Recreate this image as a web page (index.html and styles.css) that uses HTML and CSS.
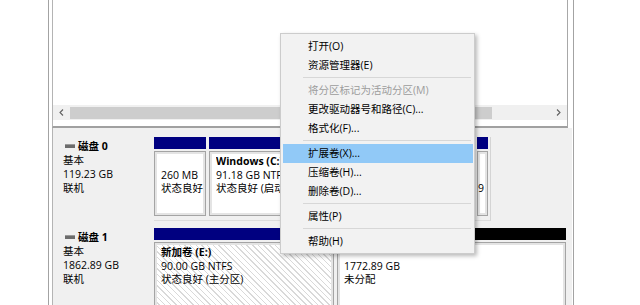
FILE: index.html
```html
<!DOCTYPE html>
<html lang="zh-CN">
<head>
<meta charset="utf-8">
<title>磁盘管理</title>
<link rel="stylesheet" href="styles.css">
</head>
<body>
<div class="shell">
  <div class="pane-top">
    <div class="volume-list"></div>
    <div class="hscroll">
      <span class="sb-arrow"><svg width="5" height="7" viewBox="0 0 5 7"><path d="M4 0.5 L1 3.5 L4 6.5" fill="none" stroke="#606060" stroke-width="1.1"/></svg></span>
      <div class="sb-track"><div class="sb-thumb"></div></div>
      <span class="sb-arrow"><svg width="5" height="7" viewBox="0 0 5 7"><path d="M1 0.5 L4 3.5 L1 6.5" fill="none" stroke="#606060" stroke-width="1.1"/></svg></span>
    </div>
    <div class="pane-gap"></div>
  </div>
  <div class="pane-bottom">
    <div class="disk">
      <div class="disk-label">
        <div class="disk-name"><span class="disk-icon"></span>磁盘 0</div>
        <div>基本</div>
        <div>119.23 GB</div>
        <div>联机</div>
      </div>
      <div class="disk-parts d0">
        <div class="part p-esp">
          <div class="bar"></div>
          <div class="box"><div>&nbsp;</div><div>260 MB</div><div>状态良好</div></div>
        </div>
        <div class="part p-win">
          <div class="bar"></div>
          <div class="box"><div class="b clip">Windows (C:)</div><div class="clip">91.18 GB NTFS</div><div class="clip">状态良好 (启动, 页面文件, 故障转储, 主分区)</div></div>
        </div>
        <div class="part p-rec">
          <div class="bar"></div>
          <div class="box"><div>&nbsp;</div><div>&nbsp;</div><div>9</div></div>
        </div>
      </div>
    </div>
    <div class="disk">
      <div class="disk-label">
        <div class="disk-name"><span class="disk-icon"></span>磁盘 1</div>
        <div>基本</div>
        <div>1862.89 GB</div>
        <div>联机</div>
      </div>
      <div class="disk-parts d1">
        <div class="part p-new">
          <div class="bar"></div>
          <div class="box hatched"><div class="b">新加卷 (E:)</div><div>90.00 GB NTFS</div><div>状态良好 (主分区)</div></div>
        </div>
        <div class="part p-free">
          <div class="bar black"></div>
          <div class="box"><div>&nbsp;</div><div>1772.89 GB</div><div>未分配</div></div>
        </div>
      </div>
    </div>
  </div>
</div>

<div class="menu">
  <div class="mi">打开(O)</div>
  <div class="mi">资源管理器(E)</div>
  <div class="sep"></div>
  <div class="mi dis">将分区标记为活动分区(M)</div>
  <div class="mi">更改驱动器号和路径(C)...</div>
  <div class="mi">格式化(F)...</div>
  <div class="sep"></div>
  <div class="mi hl">扩展卷(X)...</div>
  <div class="mi">压缩卷(H)...</div>
  <div class="mi">删除卷(D)...</div>
  <div class="sep"></div>
  <div class="mi">属性(P)</div>
  <div class="sep"></div>
  <div class="mi">帮助(H)</div>
</div>
</body>
</html>
```

FILE: styles.css
```css
* { box-sizing: border-box; }
html, body { margin: 0; padding: 0; }
body {
  width: 640px;
  height: 305px;
  overflow: hidden;
  background: #fff;
  position: relative;
  font-family: "Open Sans", "Noto Sans CJK SC", sans-serif;
  font-size: 10.5px;
  color: #000;
}

.shell {
  margin-left: 48px;
  width: 526px;
  height: 305px;
  border-left: 1px solid #a3a3a3;
  border-right: 1px solid #a3a3a3;
  padding-left: 3px;
  padding-right: 1px;
  display: flex;
  flex-direction: column;
}

.pane-top {
  height: 128px;
  flex: none;
  margin-right: 4px;
  border-left: 1px solid #b4b4b4;
  border-right: 1px solid #a8a8a8;
  border-bottom: 2px solid #a0a0a0;
  display: flex;
  flex-direction: column;
  background: #fff;
}
.volume-list { height: 105px; }
.hscroll {
  height: 15px;
  display: flex;
  align-items: center;
  background: #f0f0f0;
}
.sb-arrow {
  width: 17px;
  height: 15px;
  display: flex;
  align-items: center;
  justify-content: center;
}
.sb-track { flex: 1; height: 15px; display: flex; align-items: center; }
.sb-thumb { width: 422px; height: 12px; background: #cdcdcd; }
.pane-gap { flex: 1; }

.pane-bottom {
  flex: 1;
  background: #f0f0f0;
  border-left: 1px solid #b4b4b4;
  padding-top: 9px;
}
.disk { display: flex; height: 84px; }
.disk + .disk { margin-top: 7px; }
.disk-label {
  width: 101px;
  flex: none;
  padding: 2px 0 0 10px;
  line-height: 14px;
}
.disk-name { font-weight: 700; display: flex; align-items: center; padding-left: 2px; }
.disk-icon {
  width: 10px;
  height: 4px;
  background: #6c6c6c;
  border-top: 1px solid #9a9a9a;
  margin-right: 3px;
}

.disk-parts { display: flex; gap: 3px; height: 100%; }
.d0 { width: 337px; padding-right: 2px; border-right: 1px solid #d4d4d4; padding-bottom: 4px; border-bottom: 1px solid #dcdcdc; }
.d1 { width: 413px; }
.part { display: flex; flex-direction: column; flex: none; }
.p-esp { width: 52px; }
.p-win { width: 265px; }
.p-rec { width: 11px; }
.p-new { width: 180px; }
.p-free { width: 229px; }

.bar { height: 12px; background: #000080; flex: none; }
.bar.black { background: #000; }
.box {
  margin-top: 2px;
  flex: 1;
  background: #fff;
  border: 1px solid #a4a4a4;
  box-shadow: inset 0 0 0 2px #e4e4e4;
  padding: 3px 0 0 6px;
  line-height: 13.5px;
  white-space: nowrap;
  overflow: hidden;
}
.p-rec .box { padding-left: 0; }
.clip { max-width: 88px; overflow: hidden; }
.b { font-weight: 700; }
.hatched {
  background: repeating-linear-gradient(45deg, #ffffff 0 3px, #d9d9d9 3px 4px);
}

.menu {
  position: absolute;
  left: 280px;
  top: 33px;
  width: 195px;
  background: #f2f2f2;
  border: 1px solid #cccccc;
  box-shadow: 2px 2px 4px rgba(0, 0, 0, 0.28);
  padding: 3px 1px 2px 2px;
}
.mi {
  height: 19px;
  line-height: 19px;
  padding-left: 25px;
  white-space: nowrap;
}
.mi.hl { background: #91c9f7; }
.mi.dis { color: #9c9c9c; }
.sep {
  height: 1px;
  margin: 2px 2px 3px 20px;
  background: #d7d7d7;
}
```
